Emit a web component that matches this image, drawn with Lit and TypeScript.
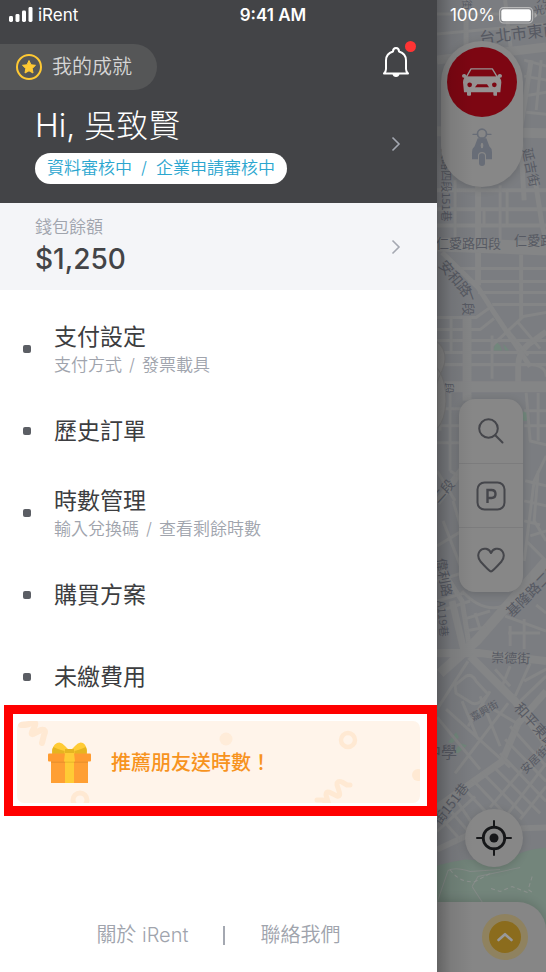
import { LitElement, html, svg, css } from "lit";
import { customElement, property } from "lit/decorators.js";

interface MenuEntry {
  title: string;
  note?: string[];
}

const MENU: MenuEntry[] = [
  { title: "支付設定", note: ["支付方式", "發票載具"] },
  { title: "歷史訂單" },
  { title: "時數管理", note: ["輸入兌換碼", "查看剩餘時數"] },
  { title: "購買方案" },
  { title: "未繳費用" },
];

const chevron = html`<svg class="chevron" viewBox="0 0 10 16" width="10" height="16" aria-hidden="true">
  <path d="M1.5 1.5 L8 8 L1.5 14.5" fill="none" stroke="currentColor" stroke-width="1.6" />
</svg>`;

/* Roads: [path, width] */
const ROADS: [string, number][] = [
  ["M437 14H546", 3], ["M437 34L546 24", 3], ["M466 0V60", 5], ["M505 0L512 60", 4], ["M437 60L546 47", 9],
  ["M524 60L546 66M524 76L546 80M523 96L546 92M526 112L546 114", 3], ["M437 131L546 133", 10],
  ["M531 60L520 132L524 200", 5], ["M541 60L536 110", 3],
  ["M437 190H546M437 209H546M437 225H546", 4], ["M484 209V225M507 190V225", 3],
  ["M455 180V240M500 185V240", 3], ["M478 180V285", 6], ["M535 180L542 225L546 240", 5],
  ["M437 244L546 248", 14], ["M521 254V318", 4],
  ["M455 268H546M468 281H546M478 292H546M492 304H546", 3],
  ["M442 252L478 287L494 312L530 366", 5],
  ["M437 317H476L490 307M437 329H480L494 318M437 340H546M437 352H546M437 364H546", 3],
  ["M467 316V400", 9], ["M451 317V352M492 335V378", 3], ["M546 331L528 344Q518 352 518 366V390", 6],
  ["M546 312L523 316L492 345M508 330L528 355M518 322L540 348M532 364Q546 366 546 376", 3],
  ["M437 386H546", 11], ["M450 392V470M440 400V430M437 408H467M437 425H467M437 442H467", 3],
  ["M526 392L530 440M538 392V440M524 410H546M524 425H546M529 440L546 444", 3],
  ["M437 502L470 458", 7], ["M450 470L466 480M437 470L455 500M453 500L462 530L437 545M443 520L470 590", 3],
  ["M546 455L534 480L524 560M538 470L534 520L546 540M525 480L546 485M524 500L546 505M524 520L540 524M526 540L546 560M530 535L546 530", 3],
  ["M437 560L462 600L470 650", 5], ["M437 580L462 572M437 600L464 592M440 610L470 600M462 590Q480 610 500 606L520 595", 3],
  ["M546 560L476 640L440 672", 10], ["M452 600L464 650", 7], ["M464 618L490 610M466 630L486 626M475 612L480 628", 3],
  ["M437 652H480L546 660", 8], ["M505 615L546 630M510 625V645M524 618V648M508 632H540M536 604L546 612", 3],
  ["M470 655L515 700L546 742", 8], ["M495 668L510 685M510 665L500 690M530 662L515 695M524 680L546 668M520 700L546 675", 3],
  ["M437 708L468 660M455 684L466 675Q472 672 476 680L488 693Q478 705 472 702L456 692Z", 3],
  ["M437 716L480 768M446 708L510 766M462 700L478 738M480 695L500 745M490 690L468 725M508 702L455 772", 3],
  ["M546 690L518 722L502 760L437 806", 7], ["M510 725L546 765M505 738L546 780M500 752L546 800M492 764L540 812M482 771L524 814M472 778L510 818M462 785L490 815M452 792L476 828", 3],
  ["M520 724L488 705M546 740L490 806M546 762L508 812M546 785L520 818", 3],
  ["M437 848L465 835L490 828L546 826", 6], ["M437 812L460 838M445 803L470 832M437 830L475 795", 3],
];

/* Street names: [text, x, y, size, angle] */
const LABELS: [string, number, number, number, number][] = [
  ["台北市東西", 480, 44, 16, -7], ["延吉街", 522, 149, 13, 78], ["文路四段151巷", 442, 148, 11, 90],
  ["仁愛路四段", 436, 248, 13, 0], ["仁愛路", 514, 245, 13, 0], ["安和路", 438, 265, 14, 50],
  ["一", 464, 289, 13, 70], ["段", 464, 302, 13, 90], ["二段", 438, 503, 13, -48], ["段", 444, 382, 11, 90],
  ["偉利路", 436, 558, 13, 80], ["基隆路二段", 512, 617, 14, -45], ["A119巷", 437, 600, 11, 85],
  ["崇德街", 491, 661, 13, 2], ["嘉興街", 473, 720, 10, -30], ["和平東路", 513, 707, 14, 48],
  ["中學", 425, 757, 16, 0], ["安居街", 525, 773, 11, -44], ["街151巷", 440, 824, 13, -52],
  ["光復", 534, 15, 11, -10], ["光", 536, 2, 11, 0], ["街", 463, 0, 10, 90],
];

@customElement("street-map")
class StreetMap extends LitElement {
  static styles = css`
    :host { display: block; }
    svg { display: block; width: 100%; height: 100%; }
    .label { fill: #575a63; font-family: "Noto Sans CJK TC", sans-serif; }
  `;
  render() {
    return html`<svg viewBox="437 0 109 972" preserveAspectRatio="xMinYMin slice" aria-hidden="true">
      <rect x="437" y="0" width="2000" height="2000" fill="#7b7d81" />
      <path d="M437 864Q452 860 465 858L505 860Q520 848 546 846V972H437Z" fill="#73857b" />
      <path d="M493 350L496 341L500 345L502 350ZM503 343L509 350H505ZM523 411L527 409V420H523ZM448 741L456 731L459 736L452 742ZM454 751L460 742L467 744L458 752Z" fill="#72877c" />
      ${ROADS.map(([d, w]) => svg`<path d=${d} fill="none" stroke="#848586" stroke-width=${w} stroke-linejoin="round" />`)}
      <path d="M437 901L448 869Q455 865 470 870L500 868M472 885L483 902M472 885L478 875L520 866" fill="none" stroke="#858b88" stroke-width="1" />
      <path d="M450 868Q460 882 475 880L490 872M491 887L500 890L512 885L530 892M532 875L528 888L534 892" fill="none" stroke="#8b908d" stroke-width="1" stroke-dasharray="4 3" />
      ${LABELS.map(([t, x, y, s, r]) => svg`<text class="label" x=${x} y=${y} font-size=${s} transform=${`rotate(${r} ${x} ${y})`}>${t}</text>`)}
      <path d="M437 341Q445 347 445 358Q445 364 442 370Q437 380 437 385ZM437 367Q446 378 446 400Q445 420 437 428Z" fill="#868686" stroke="#7a7a7b" stroke-width="1" />
    </svg>`;
  }
}

@customElement("status-bar")
class StatusBar extends LitElement {
  static styles = css`
    :host {
      display: grid; grid-template-columns: 1fr auto 1fr; align-items: center;
      height: 30px; padding: 0 8px; color: #fff;
      font: 400 17px/30px Inter, sans-serif;
    }
    .carrier { display: flex; align-items: center; gap: 5px; }
    .time { font-weight: 600; }
    .battery { display: flex; align-items: center; justify-content: flex-end; gap: 4px; }
  `;
  render() {
    return html`
      <span class="carrier">
        <svg width="25" height="16" viewBox="0 0 25 16" fill="#fff" aria-hidden="true">
          <rect x="1" y="9" width="4" height="6" rx="1.4" /><rect x="7.500" y="7" width="4" height="8" rx="1.400" />
          <rect x="14" y="3.500" width="4" height="11.500" rx="1.4" /><rect x="20.500" y="0" width="4" height="15" rx="1.400" />
        </svg>iRent</span>
      <span class="time">9:41 AM</span>
      <span class="battery">100%
        <svg width="39" height="17" viewBox="0 0 39 17" aria-hidden="true">
          <rect x="0.600" y="0.600" width="33" height="15.400" rx="4" fill="none" stroke="#b9b9b9" stroke-width="1.200" />
          <rect x="2.300" y="2.300" width="29.600" height="12" rx="2.200" fill="#fff" />
          <path d="M35.500 5.500Q38 6.500 38 8.300Q38 10 35.500 11Z" fill="#a5a5a5" />
        </svg></span>`;
  }
}

@customElement("menu-item")
class MenuItem extends LitElement {
  @property({ attribute: false }) entry: MenuEntry = { title: "" };
  static styles = css`
    :host { display: block; }
    .row {
      display: flex; align-items: center; gap: 23px; width: 100%; height: 56px; padding: 0 23px;
      border: 0; background: none; text-align: left; cursor: pointer;
      font-family: Inter, "Noto Sans CJK TC", sans-serif;
    }
    .bullet { flex: none; width: 8px; height: 8px; border-radius: 2px; background: #5b5e64; }
    .text { display: flex; flex-direction: column; }
    .title { font-size: 23px; line-height: 32px; font-weight: 400; color: #3c3d40; }
    .note { display: flex; gap: 7px; font-size: 17px; line-height: 24px; color: #a0a4ad; font-weight: 350; }
  `;
  render() {
    const { title, note } = this.entry;
    return html`<button class="row" type="button">
      <span class="bullet"></span>
      <span class="text">
        <span class="title">${title}</span>
        ${note ? html`<span class="note"><span>${note[0]}</span><span>/</span><span>${note[1]}</span></span>` : ""}
      </span>
    </button>`;
  }
}

@customElement("promo-card")
class PromoCard extends LitElement {
  static styles = css`
    :host { display: block; }
    .card {
      position: relative; display: flex; align-items: center; gap: 20px; width: 100%; height: 82px;
      padding: 0 31px; border: 0; border-radius: 7px; overflow: hidden; cursor: pointer;
      background: #fff4ea; color: #f7931e;
      font: 500 20px/30px "Noto Sans CJK TC", sans-serif;
    }
    .confetti { position: absolute; top: 0; height: 82px; }
    .start { left: 0; }
    .end { right: 0; }
    .gift { flex: none; }
  `;
  render() {
    return html`<button class="card" type="button">
      <svg class="confetti start" width="240" height="82" viewBox="0 0 240 82" fill="none" stroke="#ffe9d3" stroke-linecap="round" aria-hidden="true">
        <path d="M4 4Q12 4 16 1Q20 1 17 7Q13 14 16 13L24 9Q30 8 27 14L25 22" stroke-width="6" stroke-linejoin="round" />
        <circle cx="63" cy="79" r="7" stroke-width="5" />
        <circle cx="209" cy="18" r="6.500" fill="#ffecd9" stroke="none" />
      </svg>
      <svg class="confetti end" width="120" height="82" viewBox="0 0 120 82" fill="none" stroke="#ffe9d3" stroke-linecap="round" aria-hidden="true">
        <circle cx="48" cy="19" r="7" stroke-width="4.500" />
        <circle cx="118" cy="54" r="6" fill="#ffe9d3" stroke="none" />
        <path d="M17 79L23 79L29 84L26 74Q26 69 31 72L37 75Q41 76 39 70L37 64Q37 59 42 61L47 64H50" stroke-width="5" stroke-linejoin="round" />
      </svg>
      <svg class="gift" width="43" height="41" viewBox="0 0 43 41" aria-hidden="true">
        <path d="M4 12Q4 3 9 1Q13 -1 17 4L20 7H24L27 4Q31 -1 35 1Q39 3 39 12Z" fill="#ffcb35" />
        <path d="M4.500 12Q3.500 7 5.500 5Q9 7 16.500 9V12ZM38.500 12Q39.500 7 37.500 5Q34 7 26.500 9V12ZM17 7H26V12H17Z" fill="#e6b420" />
        <rect x="3" y="18" width="37" height="23" fill="#ff9f33" />
        <rect x="0" y="11.500" width="43" height="8" rx="1" fill="#ff9b30" />
        <rect x="3" y="19.500" width="37" height="1.500" fill="#ee932d" />
        <rect x="17" y="19" width="9" height="22" fill="#ffcb35" />
        <path d="M17 11H26L27 19.500H16Z" fill="#ffcb35" />
        <rect x="17" y="19.500" width="9" height="1.500" fill="#efbd2d" />
      </svg>
      <span>推薦朋友送時數！</span>
    </button>`;
  }
}

@customElement("map-controls")
class MapControls extends LitElement {
  static styles = css`
    :host { display: flex; flex-direction: column; align-items: flex-end; }
    button { border: 0; padding: 0; cursor: pointer; display: flex; align-items: center; justify-content: center; }
    svg { display: block; }
    .vehicles, .tools, .locate { margin-right: 23px; background: #878787; box-shadow: 0 2px 8px rgba(0, 0, 0, 0.16); }
    .vehicles {
      display: flex; flex-direction: column; width: 82px; height: 146px; margin-top: 41px;
      padding: 6px; box-sizing: border-box; border-radius: 41px;
    }
    .car { width: 70px; height: 70px; border-radius: 50%; background: #7d0612; }
    .scooter { height: 64px; padding-bottom: 4px; box-sizing: border-box; background: none; }
    .tools { width: 64px; height: 193px; margin-top: 212px; border-radius: 16px; display: flex; flex-direction: column; }
    .tool { flex: 1; background: none; }
    .tool + .tool { border-top: 1px solid #7c7c7d; }
    .locate { width: 58px; height: 58px; margin-top: auto; border-radius: 50%; }
    .sheet {
      display: flex; align-items: center; justify-content: flex-end; align-self: stretch; height: 70px;
      margin-top: 35px; padding-right: 18px; border-radius: 0 28px 0 0; background: #868686;
      box-shadow: 0 -2px 10px rgba(0, 0, 0, 0.14);
    }
    .up { width: 46px; height: 46px; border: 7px solid #8f825f; border-radius: 50%; background: #8b6c1d; box-sizing: border-box; }
  `;
  render() {
    return html`
      <div class="vehicles">
        <button class="car" type="button" aria-label="汽車">
          <svg width="40" height="28" viewBox="567 205 120 83" aria-hidden="true">
            <path d="M594 207H658L673 232H580Z" fill="none" stroke="#969292" stroke-width="4" stroke-linejoin="round" />
            <path d="M567 227Q569 222 577 223L582 229L577 235L568 232ZM687 227Q685 222 677 223L672 229L677 235L686 232Z" fill="#969292" />
            <path fill-rule="evenodd" fill="#969292" d="M578 231H676Q685 236 685 248L682 277H672V286Q672 288 669 288H664Q661 288 661 285V277H594V285Q594 288 591 288H585Q582 288 582 285V277H573L570 248Q570 236 578 231ZM590 248A7 7 0 1 0 590 262A7 7 0 1 0 590 248ZM664 248A7 7 0 1 0 664 262A7 7 0 1 0 664 248ZM613 253L606 262H648L642 253Z" />
          </svg>
        </button>
        <button class="scooter" type="button" aria-label="機車">
          <svg width="20" height="38" viewBox="597 389 60 114" aria-hidden="true">
            <circle cx="627" cy="406" r="13.500" fill="none" stroke="#686d77" stroke-width="5" />
            <path d="M600 408H613M641 408H654" stroke="#686d77" stroke-width="4" stroke-linecap="round" />
            <path fill-rule="evenodd" fill="#686d77" d="M614 420H640L649 444Q657 450 657 462V483H639V470Q637 461 627 461Q617 461 615 470V483H597V462Q597 450 605 444ZM627 433Q623 433 623 441Q623 450 627 450Q631 450 631 441Q631 433 627 433Z" />
            <rect x="618" y="465" width="18" height="38" rx="9" fill="#686d77" />
          </svg>
        </button>
      </div>
      <div class="tools">
        <button class="tool" type="button" aria-label="搜尋">
          <svg width="26" height="26" viewBox="0 0 26 26" fill="none" stroke="#45464b" stroke-width="2" stroke-linecap="round" aria-hidden="true">
            <circle cx="10.500" cy="10.500" r="9.300" /><path d="M17.300 17.300L24.500 24.500" />
          </svg>
        </button>
        <button class="tool" type="button" aria-label="停車場">
          <svg width="30" height="30" viewBox="0 0 30 30" fill="none" stroke="#45464b" aria-hidden="true">
            <rect x="1.500" y="1.500" width="27" height="27" rx="7" stroke-width="2" />
            <path d="M11.500 22V9H15.500Q19.500 9 19.500 13Q19.500 17 15.500 17H11.500" stroke-width="2.400" />
          </svg>
        </button>
        <button class="tool" type="button" aria-label="收藏">
          <svg width="28" height="26" viewBox="0 0 28 26" fill="none" stroke="#45464b" stroke-width="2" stroke-linejoin="round" aria-hidden="true">
            <path d="M14 24.500Q12.500 24.500 3.500 14.500Q-0.500 9 2.500 4.500Q5 1 9 1.800Q12.500 2.500 14 6Q15.500 2.500 19 1.800Q23 1 25.500 4.500Q28.500 9 24.500 14.500Q15.500 24.500 14 24.500Z" />
          </svg>
        </button>
      </div>
      <button class="locate" type="button" aria-label="定位">
        <svg width="36" height="36" viewBox="0 0 36 36" fill="none" stroke="#161719" aria-hidden="true">
          <circle cx="18" cy="18" r="10.800" stroke-width="2.800" />
          <circle cx="18" cy="18" r="4.500" fill="#161719" stroke="none" />
          <path d="M18 1V7.500M18 28.500V35M1 18H7.500M28.500 18H35" stroke-width="2" stroke-linecap="round" />
        </svg>
      </button>
      <div class="sheet">
        <button class="up" type="button" aria-label="展開">
          <svg width="16" height="10" viewBox="0 0 16 10" aria-hidden="true">
            <path d="M1.500 8L8 2.200L14.500 8" fill="none" stroke="#999" stroke-width="2.600" stroke-linecap="round" stroke-linejoin="round" />
          </svg>
        </button>
      </div>`;
  }
}

@customElement("app-root")
class AppRoot extends LitElement {
  static styles = css`
    :host {
      position: relative; display: grid; grid-template-columns: 4fr 1fr; min-height: 100vh;
      background: #fff; font-family: Inter, "Noto Sans CJK TC", sans-serif;
    }
    * { box-sizing: border-box; }
    button { border: 0; padding: 0; background: none; font: inherit; color: inherit; text-align: left; cursor: pointer; }
    svg { display: block; }
    .status { position: absolute; top: 0; left: 0; right: 0; z-index: 2; }
    .drawer { display: flex; flex-direction: column; min-width: 0; background: #fff; }
    .head { padding: 40px 0 19px; background: #434447; color: #fff; }
    .top { display: flex; justify-content: space-between; align-items: flex-start; padding-right: 21px; }
    .achievements {
      display: flex; align-items: center; gap: 10px; height: 46px; margin-top: 4px; padding: 0 25px 0 16px;
      border-radius: 0 23px 23px 0; background: #555657; color: #d5d5d5;
      font-size: 20px; line-height: 30px; font-weight: 350;
    }
    .profile { display: flex; align-items: center; justify-content: space-between; width: 100%; margin-top: 14px; padding: 0 36px 0 35px; }
    .who { display: flex; flex-direction: column; align-items: flex-start; }
    .name { font-size: 32px; line-height: 44px; font-weight: 300; }
    .pending {
      display: flex; gap: 9px; height: 31px; margin-top: 5px; padding: 0 12px; border-radius: 16px;
      background: #fff; color: #2ba6cf; font-size: 17px; line-height: 31px; font-weight: 350;
    }
    .chevron { flex: none; color: #a4a8b1; }
    .wallet {
      display: flex; align-items: center; justify-content: space-between; height: 87px;
      padding: 0 36px 0 35px; background: #f4f5f8;
    }
    .sum { display: flex; flex-direction: column; }
    .caption { color: #a0a4ad; font-size: 17px; line-height: 24px; font-weight: 350; }
    .amount { color: #434447; font-size: 28px; line-height: 40px; font-weight: 500; }
    .menu { display: flex; flex-direction: column; gap: 26px; margin: 0; padding: 31px 0 0; list-style: none; }
    .highlight { margin-left: 4px; padding: 7px 7px 3px 4px; border: 10px solid #f00; border-width: 9px 10px 10px 9px; }
    .foot { display: flex; justify-content: center; align-items: center; gap: 35px; margin-top: auto; padding: 0 0 22px; color: #a0a4ad; font-size: 20px; line-height: 30px; font-weight: 350; }
    .foot a { color: inherit; text-decoration: none; }
    .rule { width: 2px; height: 19px; background: #a4a8b1; }
    .scene { position: relative; display: flex; overflow: hidden; background: #7b7d81; }
    .map { position: absolute; inset: 0; }
    .controls { position: relative; flex: 1; }
    .shade { position: absolute; inset: 0; pointer-events: none; background: linear-gradient(90deg, rgba(0, 0, 0, 0.26), rgba(0, 0, 0, 0.08) 14px, rgba(0, 0, 0, 0) 36px); }
  `;
  render() {
    return html`
      <status-bar class="status"></status-bar>
      <nav class="drawer">
        <header class="head">
          <div class="top">
            <button class="achievements" type="button">
              <svg width="26" height="26" viewBox="0 0 26 26" aria-hidden="true">
                <circle cx="13" cy="13" r="12" fill="none" stroke="#ffc933" stroke-width="2" />
                <path d="M13 6.500L15 10.800L19.500 11.300L16.200 14.500L17 19L13 16.800L9 19L9.800 14.500L6.500 11.300L11 10.800Z" fill="#ffc933" stroke="#ffc933" stroke-width="1" stroke-linejoin="round" />
              </svg>我的成就</button>
            <button type="button" aria-label="通知">
              <svg width="36" height="40" viewBox="380 40 36 40" aria-hidden="true">
                <path d="M384 73.500H408Q406 71.500 406 69V60.500Q406 53.500 399 51.500Q399 48 396 48Q393 48 393 51.500Q386 53.500 386 60.500V69Q386 71.500 384 73.500Z" fill="none" stroke="#fff" stroke-width="2" stroke-linejoin="round" />
                <path d="M392.500 74H399.500Q399 77 396 77Q393 77 392.500 74Z" fill="#fff" />
                <circle cx="410.500" cy="46.500" r="5.500" fill="#ff3434" />
              </svg>
            </button>
          </div>
          <button class="profile" type="button">
            <span class="who">
              <span class="name">Hi, 吳致賢</span>
              <span class="pending"><span>資料審核中</span><span>/</span><span>企業申請審核中</span></span>
            </span>
            ${chevron}
          </button>
        </header>
        <button class="wallet" type="button">
          <span class="sum"><span class="caption">錢包餘額</span><span class="amount">$1,250</span></span>
          ${chevron}
        </button>
        <ul class="menu">
          ${MENU.map((entry) => html`<li><menu-item .entry=${entry}></menu-item></li>`)}
        </ul>
        <div class="highlight"><promo-card></promo-card></div>
        <footer class="foot">
          <a href="#about">關於 iRent</a><span class="rule"></span><a href="#contact">聯絡我們</a>
        </footer>
      </nav>
      <main class="scene">
        <street-map class="map"></street-map>
        <map-controls class="controls"></map-controls>
        <div class="shade"></div>
      </main>`;
  }
}
